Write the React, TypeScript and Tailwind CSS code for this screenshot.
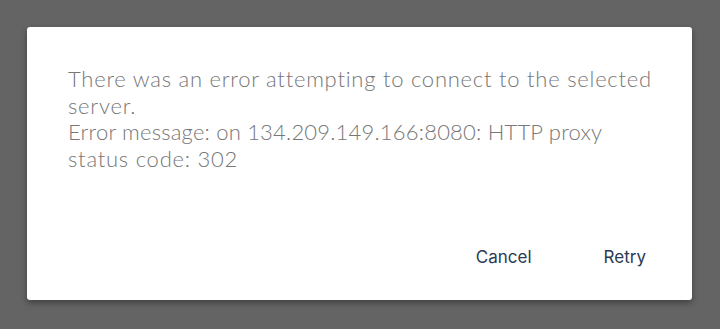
import React from 'react';

const App = () => {
  return (
    <div className="w-full h-[329px] bg-[#646464] pt-[27px] pl-[27px] overflow-hidden">
      <div className="w-[665px] h-[273px] bg-white rounded-[3px] shadow-[0_3px_6px_rgba(0,0,0,0.35)] flex flex-col">
        {/* message */}
        <div className="mt-[39px] ml-[41px] mr-[12px] h-[101px] overflow-hidden text-[#777777] text-[22px] leading-[26.5px] font-['Lato',sans-serif] font-light tracking-[0.76px]">
          <div className="whitespace-nowrap">There was an error attempting to connect to the selected</div>
          <div className="whitespace-nowrap">server.</div>
          <div className="whitespace-nowrap tracking-[0.2px]">Error message: on 134.209.149.166:8080: HTTP proxy</div>
          <div className="whitespace-nowrap">status code: 302</div>
        </div>

        <div className="flex-1" />

        {/* actions */}
        <div className="flex justify-end items-center gap-[72px] pr-[46px] pb-[33px] text-[#2b3a52] text-[17px] font-['Inter',sans-serif]">
          <button type="button" className="leading-[20px]">Cancel</button>
          <button type="button" className="leading-[20px]">Retry</button>
        </div>
      </div>
    </div>
  );
};

export default App;
